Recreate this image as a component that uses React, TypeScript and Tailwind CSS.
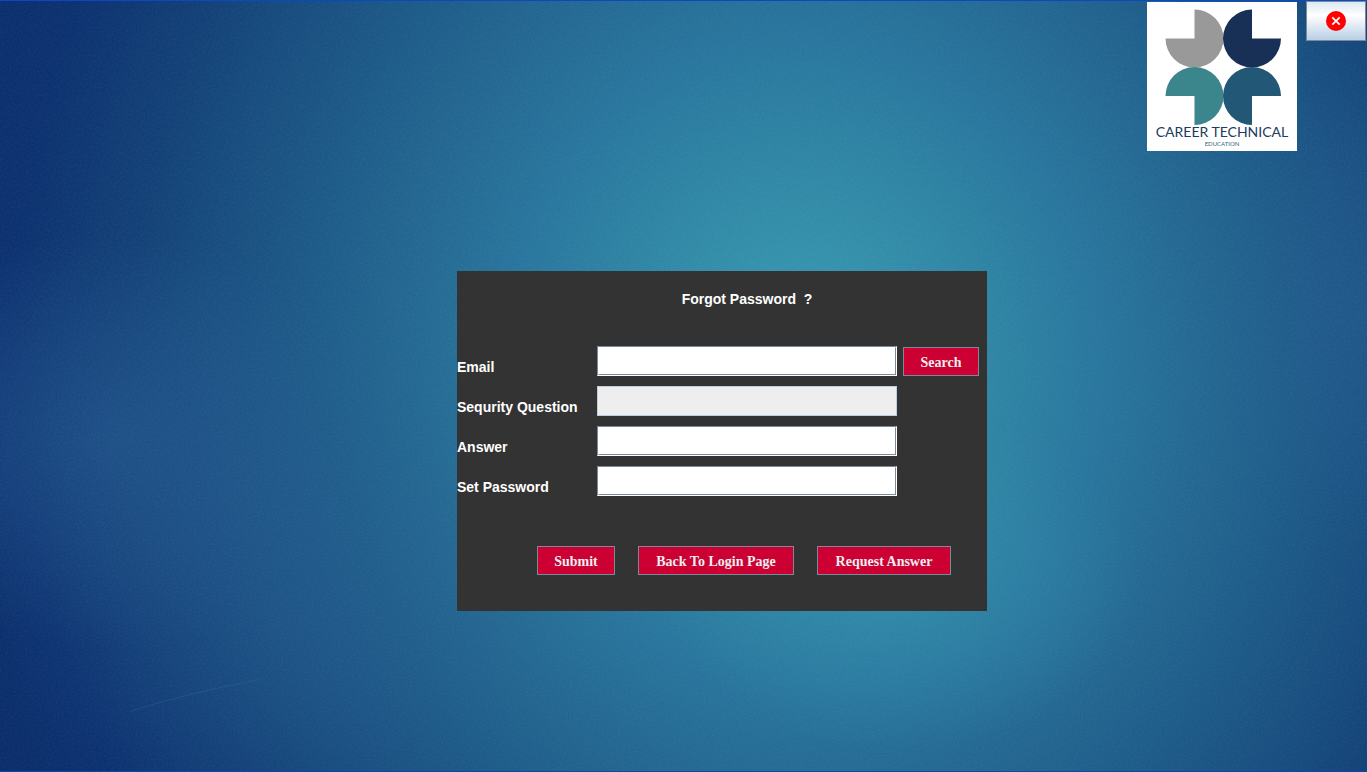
import type { ReactNode } from "react";

function Backdrop() {
  return (
    <svg
      aria-hidden="true"
      className="absolute inset-0 -z-10 h-full w-full"
      viewBox="0 0 1367 772"
      preserveAspectRatio="none"
    >
      <defs>
        <radialGradient
          id="base"
          gradientUnits="userSpaceOnUse"
          cx="0"
          cy="0"
          r="1"
          gradientTransform="translate(805 360) rotate(-8) scale(880 968)"
        >
          <stop offset="0" stopColor="#399bb3" />
          <stop offset="0.11" stopColor="#3591ac" />
          <stop offset="0.23" stopColor="#2e83a3" />
          <stop offset="0.33" stopColor="#29769e" />
          <stop offset="0.45" stopColor="#246892" />
          <stop offset="0.55" stopColor="#1e5c89" />
          <stop offset="0.65" stopColor="#195081" />
          <stop offset="0.76" stopColor="#134177" />
          <stop offset="0.9" stopColor="#0c316f" />
          <stop offset="1" stopColor="#0b2e6b" />
        </radialGradient>
        <radialGradient id="haze">
          <stop offset="0" stopColor="#2a6096" stopOpacity="0.55" />
          <stop offset="0.5" stopColor="#2a6096" stopOpacity="0.3" />
          <stop offset="1" stopColor="#2a6096" stopOpacity="0" />
        </radialGradient>
        <radialGradient id="glow">
          <stop offset="0" stopColor="#3797b0" stopOpacity="0.5" />
          <stop offset="0.5" stopColor="#3797b0" stopOpacity="0.25" />
          <stop offset="1" stopColor="#3797b0" stopOpacity="0" />
        </radialGradient>
        <filter id="grain" x="0" y="0" width="1" height="1">
          <feTurbulence type="fractalNoise" baseFrequency="0.5" numOctaves="2" />
          <feColorMatrix values="0 0 0 0 0.6  0 0 0 0 0.8  0 0 0 0 0.9  0.3 0 0 0 -0.1" />
        </filter>
      </defs>
      <rect width="1367" height="772" fill="url(#base)" />
      <ellipse cx="120" cy="440" rx="290" ry="210" fill="url(#haze)" />
      <ellipse cx="280" cy="620" rx="280" ry="200" fill="url(#haze)" opacity="0.6" />
      <ellipse cx="1360" cy="310" rx="160" ry="240" fill="url(#haze)" opacity="0.7" />
      <ellipse cx="900" cy="580" rx="240" ry="170" fill="url(#glow)" />
      <rect width="1367" height="772" filter="url(#grain)" opacity="0.3" />
      <path d="M130 712 Q180 696 260 680" stroke="#3f82ad" strokeOpacity="0.25" fill="none" />
    </svg>
  );
}

function Logo() {
  return (
    <div className="mt-px flex h-[149px] w-[150px] flex-col items-center bg-white font-['Lato','Liberation_Sans',sans-serif]">
      <svg aria-hidden="true" viewBox="0 0 150 123" className="h-[123px] w-[150px] shrink-0">
        <path d="M47.5 36.5V7.5A29 29 0 1 1 18.5 36.5Z" fill="#999999" />
        <path d="M105 36.5H134A29 29 0 1 1 105 7.5Z" fill="#183055" />
        <path d="M47.5 94H18.5A29 29 0 1 1 47.5 123Z" fill="#3a868c" />
        <path d="M105 94V123A29 29 0 1 1 134 94Z" fill="#225776" />
      </svg>
      <span className="text-sm leading-[14px] whitespace-nowrap text-[#203a60]">CAREER TECHNICAL</span>
      <span className="text-[6px] leading-[10px] text-[#33647f]">EDUCATION</span>
    </div>
  );
}

function ActionButton({ className, children }: { className: string; children: ReactNode }) {
  return (
    <button
      type="button"
      className={`h-[29px] shrink-0 border border-[#7a8a99] bg-[#cc0033] pt-0.5 text-center font-['Liberation_Serif',serif] text-sm font-bold whitespace-nowrap text-[#eeeeee] ${className}`}
    >
      {children}
    </button>
  );
}

type FieldProps = { id: string; label: string; type?: string; readOnly?: boolean; children?: ReactNode };

function Field({ id, label, type = "text", readOnly = false, children }: FieldProps) {
  return (
    <div className="flex items-end">
      <label htmlFor={id} className="w-[140px] shrink-0 leading-[18px]">
        {label}
      </label>
      {readOnly ? (
        <input id={id} type={type} readOnly className="h-[30px] w-[300px] border border-[#b8cfe5] bg-[#eeeeee] px-1 text-[#333333] outline-none" />
      ) : (
        <div className="h-[30px] w-[300px] border border-t-[#7a8a99] border-r-white border-b-white border-l-[#7a8a99]">
          <input
            id={id}
            type={type}
            className="block h-full w-full border border-t-white border-r-[#7a8a99] border-b-[#7a8a99] border-l-white bg-white px-1 text-[#333333] outline-none"
          />
        </div>
      )}
      {children}
    </div>
  );
}

export default function App() {
  return (
    <div className="relative isolate flex min-h-screen flex-col border-t border-b border-t-[#0a48c4] border-b-[#0b46a8]">
      <Backdrop />
      <header className="flex items-start justify-end gap-[9px] pr-px">
        <Logo />
        <button
          type="button"
          aria-label="Close"
          className="flex h-10 w-[60px] items-center justify-center border border-[#7a8a99] bg-linear-to-b from-[#dde7f2] via-white via-35% to-[#b8cfe5]"
        >
          <svg aria-hidden="true" viewBox="0 0 20 20" className="h-5 w-5">
            <circle cx="10" cy="10" r="10" fill="#ff0000" />
            <path d="M6.3 6.3 13.7 13.7M13.7 6.3 6.3 13.7" stroke="#ffffff" strokeWidth="1.7" />
          </svg>
        </button>
      </header>
      <main className="flex grow items-start justify-center pt-[120px] pb-40 pl-[77px]">
        <form className="w-[530px] bg-[#333333] pt-[19px] pb-9 font-['Liberation_Sans',sans-serif] text-sm font-bold text-white">
          <h1 className="ml-[140px] w-[300px] text-center leading-[18px] whitespace-pre">{"Forgot Password  ?"}</h1>
          <div className="mt-[38px] flex flex-col gap-2.5">
            <Field id="email" label="Email" type="email">
              <ActionButton className="ml-1.5 w-[76px]">Search</ActionButton>
            </Field>
            <Field id="question" label="Sequrity Question" readOnly />
            <Field id="answer" label="Answer" />
            <Field id="password" label="Set Password" type="password" />
          </div>
          <div className="mt-[50px] flex gap-[23px] pl-20">
            <ActionButton className="w-[78px]">Submit</ActionButton>
            <ActionButton className="w-[156px]">Back To Login Page</ActionButton>
            <ActionButton className="w-[134px]">Request Answer</ActionButton>
          </div>
        </form>
      </main>
    </div>
  );
}
